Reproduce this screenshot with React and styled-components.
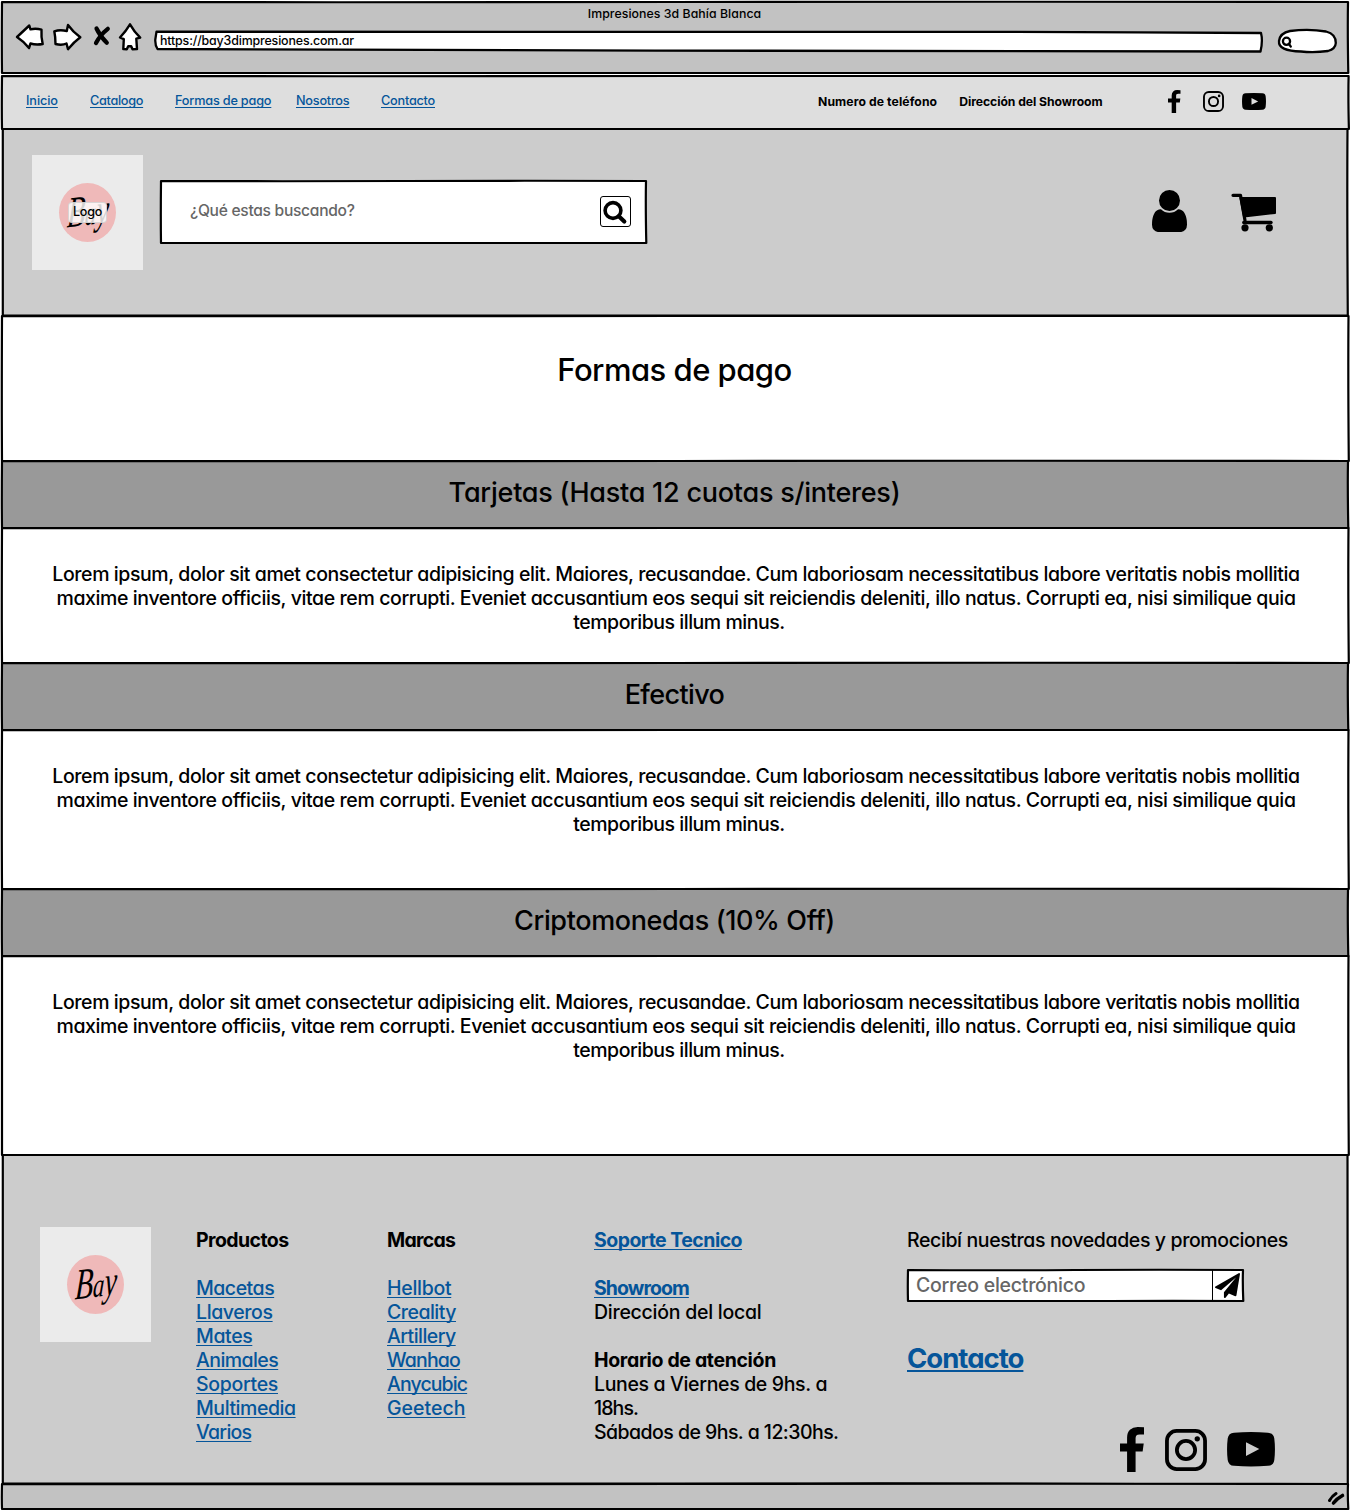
import React from "react";
import styled, { createGlobalStyle } from "styled-components";

const INK = "#000";
const LINK = "#05559a";

const GlobalStyle = createGlobalStyle`
  *, *::before, *::after { box-sizing: border-box; }
  body {
    margin: 0;
    background: #fff;
    color: ${INK};
    font-family: Inter, "Open Sans", sans-serif;
    font-feature-settings: "cv11";
    font-weight: 450;
    overflow: hidden;
  }
  h1, h2, p { margin: 0; font-weight: 450; }
`;

const Page = styled.div`
  display: flex;
  flex-direction: column;
  width: 1350px;
  height: 1511px;
  padding: 2px 2px;
`;

const Panel = styled.section`
  position: relative;
  flex: none;
  display: flex;
  height: ${(p) => p.$height}px;
  background: ${(p) => p.$fill};
`;

const Outline = styled.svg`
  position: absolute;
  inset: 0;
  overflow: visible;
  pointer-events: none;
`;

/* Hand-drawn box outline, slightly uneven on every side */
function Sketch({ width, height, left = 0, right = 0, tilt = 0, stroke = 2.2 }) {
  const r = width + right;
  return (
    <Outline width={width} height={height} fill="none" stroke={INK} strokeWidth={stroke} strokeLinejoin="round">
      <path
        d={`M${left} 0 Q${width * 0.25} .5 ${width * 0.5} 0 T${r} 0
           Q${r - 0.5} ${height * 0.4} ${r + 0.3} ${height + tilt}
           Q${width * 0.78} ${height - 0.4} ${width * 0.6} ${height}
           T${left} ${height} Q${left - 0.4} ${height * 0.6} ${left} 0Z`}
      />
    </Outline>
  );
}

const Text = styled.span`
  font-size: ${(p) => p.$size || 19.5}px;
  font-weight: ${(p) => (p.$bold ? 700 : 450)};
  letter-spacing: ${(p) => p.$track || 0}em;
  white-space: nowrap;
`;

const Link = styled.a`
  width: max-content;
  color: ${LINK};
  font-size: ${(p) => p.$size || 19.5}px;
  font-weight: ${(p) => (p.$bold ? 700 : 450)};
  letter-spacing: ${(p) => p.$track || 0}em;
  white-space: nowrap;
  text-decoration: underline;
  text-decoration-thickness: ${(p) => p.$line || 1.4}px;
  text-underline-offset: 2px;
  text-decoration-skip-ink: none;
`;

/* ---------- browser chrome ---------- */

const Chrome = styled(Panel)`
  flex-direction: column;
`;

const WindowTitle = styled.div`
  height: 24px;
  padding-right: 1px;
  line-height: 20px;
  text-align: center;
`;

const ChromeRow = styled.div`
  display: flex;
  align-items: flex-start;
  padding-left: 13px;
`;

const NavGlyphs = styled.svg`
  flex: none;
  margin-top: -6px;
`;

const AddressBar = styled.div`
  position: relative;
  display: flex;
  align-items: center;
  width: 1107px;
  height: 19px;
  margin: 5px 0 0 12px;
  padding-left: 5px;
`;

const AddressShape = styled.svg`
  position: absolute;
  inset: 0;
  overflow: visible;
`;

const Over = styled.span`
  position: relative;
  display: flex;
`;

const SearchPill = styled.svg`
  flex: none;
  margin: 1px 0 0 14px;
`;

function BrowserBar() {
  return (
    <Chrome as="header" $height={72} $fill="#c2c2c2">
      <Sketch width={1346} height={71} />
      <WindowTitle>
        <Text $size={12.3} $track={0.005}>Impresiones 3d Bahía Blanca</Text>
      </WindowTitle>
      <ChromeRow>
        <NavGlyphs width="128" height="34" viewBox="15 20 128 34" fill="#fff" stroke={INK} strokeWidth="2.4" strokeLinejoin="round" strokeLinecap="round">
          <path d="M17 37 29.3 25.5 30.5 29.3 Q36 28 41.5 29.7 Q41 37 42.7 44 Q36 45.2 30.5 43.5 L29 48 Q24.5 42 17 37Z" />
          <path d="M54.3 31.3 Q60 29.5 66.8 31 L68 25 Q73 32 80.3 37.3 Q74 42 68 49.2 L66.5 43.5 Q62 45.6 55.5 44 Q55.5 37 54.3 31.3Z" />
          <path d="M96.500 28.500Q100 36 106.800 42.800" fill="none" strokeWidth="4.200" />
          <path d="M107.800 28.800Q100 35 96 43" fill="none" strokeWidth="4.200" />
          <path d="M130 24.3 Q134 31.5 140.2 37.6 L136.3 38.6 137 49 132.5 49.3 131.2 46.2 128.2 46.2 126.8 49.3 123.3 49 123.8 39.2 120 37.5 Q126 31 130 24.3Z" />
        </NavGlyphs>
        <AddressBar>
          <AddressShape width="1107" height="19" fill="#fff" stroke={INK} strokeWidth="2.3" strokeLinejoin="round">
            <path d="M1.500 .7 Q500 1.3 700 .9 T1106 2 Q1108 10 1105.500 20.500 Q800 20.800 500 19.600 T2.500 18 Q0 14 .3 8.500 Z" />
          </AddressShape>
          <Over><Text $size={12.4} $track={-0.012}>https://bay3dimpresiones.com.ar</Text></Over>
        </AddressBar>
        <SearchPill width="62" height="28" viewBox="1276 27 62 28" fill="#fff" stroke={INK} strokeWidth="2.3">
          <path d="M1279 41 Q1280 33 1290 31 Q1309 28.500 1326 31.500 Q1336 34 1335.800 43 Q1335.500 49 1328 51 Q1314 53 1301 51.500 Q1278 51 1279 41Z" />
          <circle cx="1286.500" cy="41.300" r="3.600" strokeWidth="2.300" />
          <path d="M1289 44 1290.800 46.600" strokeLinecap="round" />
        </SearchPill>
      </ChromeRow>
    </Chrome>
  );
}

/* ---------- icons ---------- */

const Facebook = ({ width, height }) => (
  <svg width={width} height={height} viewBox="479 0 864 1664" preserveAspectRatio="none">
    <path d="M1343 12v264h-157q-86 0-116 36t-30 108v189h293l-39 296h-254v759h-306v-759h-255v-296h255v-218q0-186 104-288.5t277-102.5q147 0 228 12z" />
  </svg>
);

const Instagram = ({ size }) => (
  <svg width={size} height={size} viewBox="0 0 41 41" fill="none" stroke={INK} strokeWidth="3.700">
    <rect x="1.900" y="1.900" width="37.200" height="37.200" rx="9.500" />
    <circle cx="20.500" cy="20.500" r="8.900" />
    <circle cx="31.500" cy="9.600" r="2.600" fill={INK} stroke="none" />
  </svg>
);

const Youtube = ({ width, height, hole }) => (
  <svg width={width} height={height} viewBox="0 0 48 34" preserveAspectRatio="none">
    <path d="M7 .7Q24-.6 41 .7 46.500 1 47.300 6.500 48.600 17 47.300 27.500 46.500 33 41 33.300 24 34.600 7 33.300 1.500 33 .7 27.500-.6 17 .7 6.500 1.500 1 7 .7Z" />
    <path d="M19 10 32.300 16.800 19 23.600Z" fill={hole} />
  </svg>
);

/* ---------- top navigation ---------- */

const TopNav = styled(Panel)`
  align-items: flex-start;
  padding: 13px 0 0 24px;
`;

const NavLinks = styled.nav`
  display: grid;
  grid-template-columns: 64px 85px 121px 85px 54px;
  width: 792px;
  line-height: 24px;
`;

const ContactInfo = styled.div`
  display: flex;
  gap: 22px;
  width: 350px;
  padding-top: 1px;
  line-height: 24px;
`;

const SocialSmall = styled.div`
  display: grid;
  grid-template-columns: 35px 39px 24px;
  align-items: center;
  padding-top: 1px;
`;

function Navigation() {
  return (
    <TopNav $height={53} $fill="#dedede">
      <Sketch width={1346} height={53} right={0.600} />
      <NavLinks>
        <Link $size={12.700} $track={-0.008}>Inicio</Link>
        <Link $size={12.700} $track={-0.024}>Catalogo</Link>
        <Link $size={12.700} $track={-0.015}>Formas de pago</Link>
        <Link $size={12.700} $track={-0.018}>Nosotros</Link>
        <Link $size={12.700} $track={-0.018}>Contacto</Link>
      </NavLinks>
      <ContactInfo>
        <Text $bold $size={12.200} $track={0.008}>Numero de teléfono</Text>
        <Text $bold $size={12.200} $track={-0.005}>Dirección del Showroom</Text>
      </ContactInfo>
      <SocialSmall>
        <Facebook width={12.500} height={23} />
        <Instagram size={21} />
        <Youtube width={24} height={17} hole="#dedede" />
      </SocialSmall>
    </TopNav>
  );
}

/* ---------- header ---------- */

const LogoBox = styled.div`
  position: relative;
  flex: none;
  display: flex;
  align-items: center;
  justify-content: center;
  width: 111px;
  height: 115px;
  background: #ebebeb;
`;

const LogoDisc = styled.div`
  display: flex;
  align-items: center;
  justify-content: center;
  width: 57px;
  height: 59px;
  border-radius: 50%;
  background: #efb9b9;
`;

const Signature = styled.span`
  display: flex;
  align-items: baseline;
  font-family: "Liberation Serif", serif;
  font-style: italic;
  font-weight: 400;
  font-size: 26px;
  line-height: 40px;
  transform: rotate(-7deg) skewX(-10deg) scale(0.880, 1.280);
`;

const Initial = styled.span`
  font-size: 34px;
`;

const Tail = styled.span`
  font-size: 32px;
`;

const LogoTag = styled.span`
  position: absolute;
  left: 36px;
  top: 47px;
  display: flex;
  align-items: center;
  justify-content: center;
  width: 39px;
  height: 21px;
  padding-bottom: 2px;
  border: 1px solid rgba(200, 200, 200, 0.700);
  border-radius: 4px;
  background: rgba(255, 255, 255, 0.820);
`;

function Logo({ tag }) {
  return (
    <LogoBox>
      <LogoDisc>
        <Signature>
          <Initial>B</Initial>a<Tail>y</Tail>
        </Signature>
      </LogoDisc>
      {tag && (
        <LogoTag>
          <Text $size={12.500} $track={-0.020}>{tag}</Text>
        </LogoTag>
      )}
    </LogoBox>
  );
}

const HeaderPanel = styled(Panel)`
  align-items: flex-start;
  padding: 26px 0 0 30px;
`;

const SearchField = styled.div`
  position: relative;
  display: flex;
  align-items: center;
  justify-content: space-between;
  width: 485px;
  height: 62px;
  margin: 26px 0 0 18px;
  padding: 0 15.500px 0 29px;
  background: #fff;
  color: #666;
`;

const Placeholder = styled(Text)`
  padding-bottom: ${(p) => p.$lift || 1}px;
`;

const SearchButton = styled.button`
  display: flex;
  width: 31px;
  height: 31px;
  margin-bottom: 2px;
  padding: 0;
  border: 1.500px solid ${INK};
  border-radius: 3px;
  background: #fff;
`;

const HeaderIcons = styled.div`
  display: flex;
  gap: 44px;
  margin: 35px 0 0 506px;
`;

function Header() {
  return (
    <HeaderPanel $height={187} $fill="#ccc">
      <Sketch width={1346} height={186.600} left={0.800} right={-0.500} />
      <Logo tag="Logo" />
      <SearchField>
        <Sketch width={485} height={62} />
        <Placeholder $size={15.600} $track={-0.019} $lift={3}>¿Qué estas buscando?</Placeholder>
        <SearchButton aria-label="Buscar">
          <svg width="29" height="29" viewBox="0 0 29 29" fill="none" stroke={INK}>
            <circle cx="12" cy="13.500" r="7.900" strokeWidth="3.600" />
            <path d="M17.800 19.300 23.300 24.600" strokeWidth="4.200" strokeLinecap="round" />
          </svg>
        </SearchButton>
      </SearchField>
      <HeaderIcons>
        <svg width="35" height="42" viewBox="256 128 1280 1536" preserveAspectRatio="none">
          <path d="M1536 1399q0 109-62.500 187t-150.500 78h-854q-88 0-150.500-78t-62.500-187q0-85 8.500-160.500t31.500-152 58.500-131 94-89 134.500-34.500q131 128 313 128t313-128q76 0 134.500 34.500t94 89 58.500 131 31.500 152 8.500 160.500zm-256-887q0 159-112.500 271.500t-271.500 112.500-271.500-112.500-112.500-271.500 112.500-271.500 271.500-112.500 271.500 112.500 112.500 271.500z" />
        </svg>
        <svg width="46" height="42" viewBox="1231 190 46 42" stroke={INK} strokeLinecap="round" strokeLinejoin="round">
          <path d="M1233 195.300H1240.500L1245 220.500" fill="none" strokeWidth="3.200" />
          <path d="M1240.500 198H1275V213L1244 216.500Z" strokeWidth="2" />
          <path d="M1243.800 222.500H1271" fill="none" strokeWidth="3.400" />
          <circle cx="1245" cy="227.800" r="3.600" stroke="none" />
          <circle cx="1269.300" cy="227.800" r="3.600" stroke="none" />
        </svg>
      </HeaderIcons>
    </HeaderPanel>
  );
}

/* ---------- content ---------- */

const TitlePanel = styled(Panel)`
  justify-content: center;
  padding: 33.500px 1px 0 0;
`;

const PageTitle = styled.h1`
  font-size: 31px;
  line-height: 40px;
  letter-spacing: -0.017em;
`;

const SectionBar = styled(Panel)`
  justify-content: center;
  padding: 12px 1px 0 0;
`;

const SectionTitle = styled.h2`
  font-size: 27px;
  line-height: 40px;
  letter-spacing: ${(p) => p.$track}em;
`;

const SectionBody = styled(Panel)`
  flex-direction: column;
  align-items: center;
  padding: 34px 0 0 2px;
  line-height: 24px;
`;

const LastLine = styled.p`
  padding-left: 6px;
`;

function Method({ title, track, height }) {
  return (
    <>
      <SectionBar $height={67} $fill="#999">
        <Sketch width={1346} height={67} />
        <SectionTitle $track={track}>{title}</SectionTitle>
      </SectionBar>
      <SectionBody $height={height} $fill="#fff">
        <Sketch width={1346} height={height} right={0.500} />
        <Text $track={-0.0212}>
          Lorem ipsum, dolor sit amet consectetur adipisicing elit. Maiores, recusandae. Cum laboriosam necessitatibus labore veritatis nobis mollitia
        </Text>
        <Text $track={-0.0201}>
          maxime inventore officiis, vitae rem corrupti. Eveniet accusantium eos sequi sit reiciendis deleniti, illo natus. Corrupti ea, nisi similique quia
        </Text>
        <LastLine><Text $track={-0.0245}>temporibus illum minus.</Text></LastLine>
      </SectionBody>
    </>
  );
}

/* ---------- footer ---------- */

const FooterPanel = styled(Panel)`
  align-items: flex-start;
  padding: 72px 0 0 38px;
`;

const Column = styled.div`
  display: flex;
  flex-direction: column;
  width: ${(p) => p.$width}px;
  margin-left: ${(p) => p.$before || 0}px;
  padding-top: 1px;
  line-height: 24px;
`;

const Gap = styled.div`
  flex: none;
  height: ${(p) => p.$size || 24}px;
`;

const MailField = styled.form`
  position: relative;
  display: flex;
  align-items: center;
  justify-content: space-between;
  width: 335px;
  height: 31px;
  margin-left: 1px;
  padding-left: 8px;
  background: #fff;
  color: #666;
`;

const SendButton = styled.button`
  display: flex;
  align-items: center;
  justify-content: center;
  width: 31px;
  height: 31px;
  padding: 0 2px 0 0;
  border: 0;
  border-left: 1.500px solid ${INK};
  background: #fff;
`;

const SocialLarge = styled.div`
  display: flex;
  align-items: center;
  gap: 20.500px;
  margin-left: 213px;
`;

const ContactLink = styled(Link)`
  line-height: 36px;
`;

const products = [
  ["Macetas", -0.025], ["Llaveros", -0.020], ["Mates", -0.020], ["Animales", -0.029],
  ["Soportes", -0.016], ["Multimedia", -0.023], ["Varios", -0.038],
];
const brands = [
  ["Hellbot", -0.015], ["Creality", -0.026], ["Artillery", -0.028],
  ["Wanhao", -0.042], ["Anycubic", -0.046], ["Geetech", 0.001],
];

function Footer() {
  return (
    <FooterPanel as="footer" $height={329} $fill="#ccc">
      <Sketch width={1346} height={328.500} left={0.800} right={-0.500} tilt={2} />
      <Logo />
      <Column $width={191} $before={45}>
        <Text $bold $track={-0.030}>Productos</Text>
        <Gap />
        {products.map(([name, track]) => <Link key={name} $track={track}>{name}</Link>)}
      </Column>
      <Column $width={207}>
        <Text $bold $track={-0.038}>Marcas</Text>
        <Gap />
        {brands.map(([name, track]) => <Link key={name} $track={track}>{name}</Link>)}
      </Column>
      <Column $width={313}>
        <Link $bold $track={-0.027}>Soporte Tecnico</Link>
        <Gap />
        <Link $bold $track={-0.048}>Showroom</Link>
        <Text $track={-0.013}>Dirección del local</Text>
        <Gap />
        <Text $bold $track={-0.018}>Horario de atención</Text>
        <Text $track={-0.018}>Lunes a Viernes de 9hs. a</Text>
        <Text $track={-0.045}>18hs.</Text>
        <Text $track={-0.028}>Sábados de 9hs. a 12:30hs.</Text>
      </Column>
      <Column $width={400}>
        <Text $track={-0.0198}>Recibí nuestras novedades y promociones</Text>
        <Gap $size={18} />
        <MailField>
          <Placeholder $track={-0.013}>Correo electrónico</Placeholder>
          <SendButton type="button" aria-label="Enviar">
            <svg width="25" height="25" viewBox="0 0 1792 1792">
              <path d="M1764 11q33 24 27 64l-256 1536q-5 29-32 45-14 8-31 8-11 0-24-5l-453-185-242 295q-18 23-49 23-13 0-22-4-19-7-30.500-23.500t-11.500-36.500v-349l864-1059-1069 925-395-162q-37-14-40-55-2-40 32-59l1664-960q15-9 32-9 20 0 36 11z" />
            </svg>
          </SendButton>
          <Sketch width={335} height={31} />
        </MailField>
        <Gap $size={39} />
        <ContactLink $bold $size={27.500} $track={-0.036} $line={2}>Contacto</ContactLink>
        <Gap $size={51} />
        <SocialLarge>
          <Facebook width={24} height={45} />
          <Instagram size={42} />
          <Youtube width={48} height={34.500} hole="#ccc" />
        </SocialLarge>
      </Column>
    </FooterPanel>
  );
}

const StatusBar = styled(Panel)`
  justify-content: flex-end;
  align-items: flex-start;
`;

const Grip = styled.svg`
  margin-top: 2px;
`;

export default function App() {
  return (
    <>
      <GlobalStyle />
      <Page>
        <BrowserBar />
        <Gap $size={2} />
        <Navigation />
        <Header />
        <TitlePanel $height={145} $fill="#fff">
          <Sketch width={1346} height={145} right={0.500} />
          <PageTitle>Formas de pago</PageTitle>
        </TitlePanel>
        <Method title="Tarjetas (Hasta 12 cuotas s/interes)" track={-0.009} height={135} />
        <Method title="Efectivo" track={-0.023} height={159} />
        <Method title="Criptomonedas (10% Off)" track={-0.014} height={199} />
        <Footer />
        <StatusBar $height={25} $fill="#c2c2c2">
          <Sketch width={1346} height={25} />
          <Grip width="20" height="22" viewBox="1328 1486 20 22" fill="none" stroke={INK} strokeLinecap="round">
            <path d="M1329.500 1500.500Q1332 1496 1336 1493.500" strokeWidth="3" />
            <path d="M1333.500 1503Q1337 1498.500 1342.500 1495.500" strokeWidth="3.600" />
          </Grip>
        </StatusBar>
      </Page>
    </>
  );
}
